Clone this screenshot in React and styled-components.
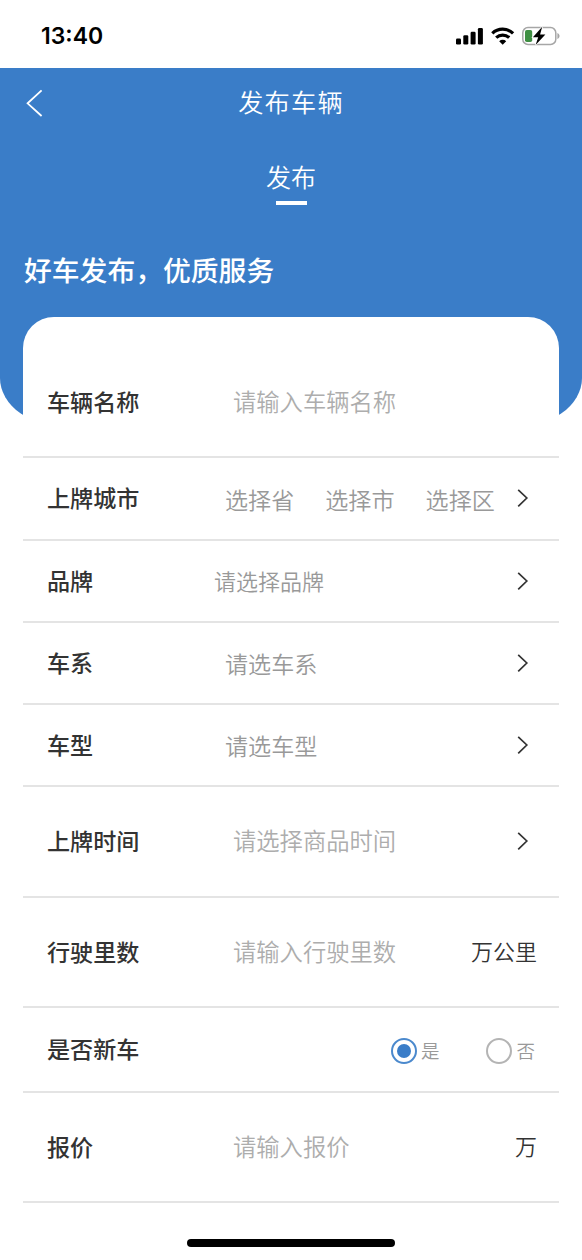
import React, { useState } from "react";
import styled, { createGlobalStyle } from "styled-components";

const GlobalStyle = createGlobalStyle`
  body {
    margin: 0;
    background: #fff;
    font-family: "Noto Sans CJK SC", sans-serif;
  }
`

const Page = styled.div`
  width: 582px;
  height: 1260px;
  overflow: hidden;
  display: flex;
  flex-direction: column;
`

const StatusBar = styled.div`
  height: 68px;
  flex: none;
  box-sizing: border-box;
  padding: 4px 22px 0 41px;
  display: flex;
  align-items: center;
  justify-content: space-between;
`

const Time = styled.span`
  font-family: Inter, sans-serif;
  font-size: 23px;
  font-weight: 600;
  color: #000;
`

const StatusIcons = styled.div`
  display: flex;
  align-items: center;
  gap: 7px;

  svg {
    display: block;
  }
`

const Header = styled.header`
  height: 360px;
  flex: none;
  box-sizing: border-box;
  background: #3a7dc8;
  border-radius: 0 0 70px 70px / 0 0 50px 50px;
  color: #fff;
`

const NavBar = styled.div`
  height: 70px;
  padding: 0 25px;
  display: grid;
  grid-template-columns: 20px 1fr 20px;
  align-items: center;
`

const Title = styled.h1`
  margin: 0;
  padding-bottom: 5px;
  font-size: 25.2px;
  font-weight: 350;
  letter-spacing: 1.2px;
  text-align: center;
`

const Tab = styled.div`
  height: 67px;
  display: flex;
  flex-direction: column;
  align-items: center;
  font-size: 25px;
  font-weight: 350;
  line-height: 36px;
  padding-top: 20px;
  box-sizing: border-box;

  &::after {
    content: "";
    width: 31px;
    height: 4px;
    margin-top: 7px;
    background: #fff;
  }
`

const Slogan = styled.h2`
  margin: 0;
  padding: 44px 24px 0;
  font-size: 27.8px;
  line-height: 40px;
  font-weight: 500;
`

const Card = styled.div`
  flex: none;
  margin: -111px 23px 0;
  background: #fff;
  border-radius: 31px 31px 0 0;
`

const Row = styled.div`
  height: ${(p) => p.$height}px;
  box-sizing: border-box;
  padding: ${(p) => p.$top || 0}px 22px 0 24px;
  border-bottom: 2px solid #e4e4e4;
  display: flex;
  align-items: center;
`

const Label = styled.div`
  width: ${(p) => p.$width || 186}px;
  flex: none;
  padding-bottom: 3px;
  font-size: 23.1px;
  line-height: 34px;
  font-weight: 500;
  color: #333;
`

const Value = styled.div`
  flex: 1;
  display: flex;
  gap: 31px;
  font-size: ${(p) => p.$size || 23.1}px;
  line-height: 34px;
  font-weight: 350;
  color: ${(p) => (p.$light ? "#adadad" : "#999")};
  padding-bottom: ${(p) => (p.$low ? 0 : 3)}px;
`

const Unit = styled.div`
  padding-bottom: 4px;
  font-size: 22px;
  line-height: 34px;
  font-weight: 350;
  color: #333;
`

const Options = styled.div`
  flex: 1;
  display: flex;
  justify-content: flex-end;
  gap: 47px;
  padding: 2px 2px 0 0;
`

const Option = styled.div`
  display: flex;
  align-items: center;
  gap: 4px;
  font-size: 18.5px;
  line-height: 26px;
  font-weight: 350;
  color: #999;
`

const Radio = styled.span`
  width: 26px;
  height: 26px;
  box-sizing: border-box;
  border: 2px solid ${(p) => (p.$checked ? "#4b89cd" : "#b4b4b4")};
  border-radius: 50%;
  display: flex;
  align-items: center;
  justify-content: center;

  &::after {
    content: "";
    width: 14px;
    height: 14px;
    border-radius: 50%;
    background: ${(p) => (p.$checked ? "#3a7dc8" : "transparent")};
  }
`

const OptionText = styled.span`
  padding-bottom: 2px;
`

const ArrowBox = styled.svg`
  display: block;
  margin: 0 8px 1px 0;
`

const HomeBar = styled.div`
  width: 208px;
  height: 8px;
  flex: none;
  margin: 36px auto 0;
  border-radius: 4px;
  background: #000;
`

const Arrow = () => (
    <ArrowBox width="12" height="20" viewBox="0 0 12 20" fill="none" stroke="#333" strokeWidth="1.7">
        <path d="M1.2 1.8L9.8 10L1.2 18.4" />
    </ArrowBox>
)

const Signal = () => (
    <svg width="28" height="18" viewBox="0 0 28 18">
        <rect x="0" y="11.5" width="5" height="6" rx="1.3" />
        <rect x="7.3" y="8.2" width="5" height="9.3" rx="1.3" />
        <rect x="14.6" y="4.7" width="5" height="12.8" rx="1.3" />
        <rect x="21.9" y="0.9" width="5" height="16.6" rx="1.3" />
    </svg>
)

const Wifi = () => (
    <svg width="24" height="18" viewBox="0 0 24 18" fill="none" stroke="#000" strokeWidth="3.2">
        <path d="M1.3 6.4a15 15 0 0 1 20.8 0" />
        <path d="M5.2 10.7a9.4 9.4 0 0 1 13 0" />
        <path d="M11.7 17.8L8.2 14.3a5 5 0 0 1 7 0z" fill="#000" stroke="none" />
    </svg>
)

const Battery = () => (
    <svg width="38" height="20" viewBox="0 0 38 20">
        <rect x="0.8" y="1.6" width="33" height="16.8" rx="5.2" fill="none" stroke="#a6a6a6" strokeWidth="1.5" />
        <path d="M35.4 7v6c1.3-.5 2.1-1.6 2.1-3s-.8-2.5-2.1-3z" fill="#a6a6a6" />
        <rect x="3" y="4" width="7.2" height="12" rx="1.8" fill="#3f8f43" />
        <path
            d="M20.2 0.8L10.9 11.2h5.3L13.6 19l9.8-10.6h-5.3z"
            fill="#000"
            stroke="#fff"
            strokeWidth="1.4"
            paintOrder="stroke"
        />
    </svg>
)

const App = () => {
    const [isNew, setIsNew] = useState("是");

    return (
        <Page>
            <GlobalStyle />
            <StatusBar>
                <Time>13:40</Time>
                <StatusIcons>
                    <Signal />
                    <Wifi />
                    <Battery />
                </StatusIcons>
            </StatusBar>
            <Header>
                <NavBar>
                    <svg width="20" height="28" viewBox="0 0 20 28" fill="none" stroke="#fff" strokeWidth="1.8">
                        <path d="M16.6 1.4L2.6 14.3L16.6 27" />
                    </svg>
                    <Title>发布车辆</Title>
                </NavBar>
                <Tab>发布</Tab>
                <Slogan>好车发布，优质服务</Slogan>
            </Header>
            <Card>
                <Row $height={141} $top={32}>
                    <Label>车辆名称</Label>
                    <Value $light $size={23.3}>请输入车辆名称</Value>
                </Row>
                <Row $height={83}>
                    <Label $width={178}>上牌城市</Label>
                    <Value $low>
                        <span>选择省</span>
                        <span>选择市</span>
                        <span>选择区</span>
                    </Value>
                    <Arrow />
                </Row>
                <Row $height={82}>
                    <Label $width={167}>品牌</Label>
                    <Value $size={22}>请选择品牌</Value>
                    <Arrow />
                </Row>
                <Row $height={82}>
                    <Label $width={178}>车系</Label>
                    <Value $low>请选车系</Value>
                    <Arrow />
                </Row>
                <Row $height={82}>
                    <Label $width={178}>车型</Label>
                    <Value $low>请选车型</Value>
                    <Arrow />
                </Row>
                <Row $height={111}>
                    <Label>上牌时间</Label>
                    <Value $light $size={23.3}>请选择商品时间</Value>
                    <Arrow />
                </Row>
                <Row $height={110}>
                    <Label>行驶里数</Label>
                    <Value $light $size={23.3}>请输入行驶里数</Value>
                    <Unit>万公里</Unit>
                </Row>
                <Row $height={85}>
                    <Label>是否新车</Label>
                    <Options>
                        {["是", "否"].map((item) => (
                            <Option key={item} onClick={() => setIsNew(item)}>
                                <Radio $checked={isNew === item} />
                                <OptionText>{item}</OptionText>
                            </Option>
                        ))}
                    </Options>
                </Row>
                <Row $height={110}>
                    <Label>报价</Label>
                    <Value $light $size={23.3}>请输入报价</Value>
                    <Unit>万</Unit>
                </Row>
            </Card>
            <HomeBar />
        </Page>
    );
};

export default App;
